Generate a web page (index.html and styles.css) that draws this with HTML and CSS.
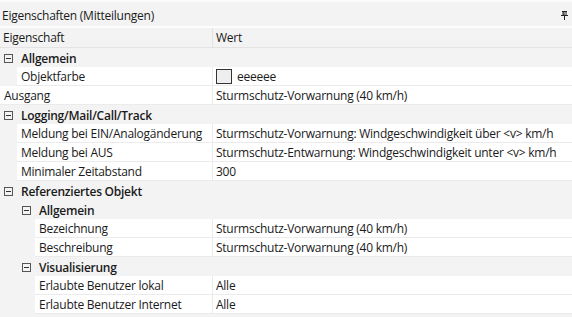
FILE: index.html
```html
<!DOCTYPE html>
<html lang="de">
<head>
    <meta charset="UTF-8">
    <title>Eigenschaften (Mitteilungen)</title>
    <link rel="stylesheet" href="styles.css">
</head>
<body>
    <div class="panel">
        <div class="titlebar">
            <span>Eigenschaften (Mitteilungen)</span>
            <svg class="pin" width="7" height="9" viewBox="0 0 7 9">
                <path d="M1 0.5h5M2 0.5v4M5 0.5v4M0 4.5h7M3.5 5v4" stroke="#222" stroke-width="1" fill="none"/>
                <path d="M2.5 1h1v3.5h-1z" fill="#222"/>
            </svg>
        </div>

        <div class="header">
            <div class="col-name">Eigenschaft</div>
            <div class="col-value">Wert</div>
        </div>

        <div class="grid">
            <div class="cat">
                <span class="toggle"></span>Allgemein
            </div>
            <div class="row lvl1">
                <div class="name">Objektfarbe</div>
                <div class="value"><span class="swatch"></span>eeeeee</div>
            </div>
            <div class="row">
                <div class="name">Ausgang</div>
                <div class="value">Sturmschutz-Vorwarnung (40 km/h)</div>
            </div>

            <div class="cat">
                <span class="toggle"></span>Logging/Mail/Call/Track
            </div>
            <div class="row lvl1">
                <div class="name">Meldung bei EIN/Analogänderung</div>
                <div class="value">Sturmschutz-Vorwarnung: Windgeschwindigkeit über &lt;v&gt; km/h</div>
            </div>
            <div class="row lvl1">
                <div class="name">Meldung bei AUS</div>
                <div class="value">Sturmschutz-Entwarnung: Windgeschwindigkeit unter &lt;v&gt; km/h</div>
            </div>
            <div class="row lvl1">
                <div class="name">Minimaler Zeitabstand</div>
                <div class="value">300</div>
            </div>

            <div class="cat">
                <span class="toggle"></span>Referenziertes Objekt
            </div>
            <div class="cat sub">
                <span class="toggle"></span>Allgemein
            </div>
            <div class="row lvl2">
                <div class="name">Bezeichnung</div>
                <div class="value">Sturmschutz-Vorwarnung (40 km/h)</div>
            </div>
            <div class="row lvl2">
                <div class="name">Beschreibung</div>
                <div class="value">Sturmschutz-Vorwarnung (40 km/h)</div>
            </div>
            <div class="cat sub">
                <span class="toggle"></span>Visualisierung
            </div>
            <div class="row lvl2">
                <div class="name">Erlaubte Benutzer lokal</div>
                <div class="value">Alle</div>
            </div>
            <div class="row lvl2">
                <div class="name">Erlaubte Benutzer Internet</div>
                <div class="value">Alle</div>
            </div>
        </div>
    </div>
</body>
</html>
```

FILE: styles.css
```css
* {
    margin: 0;
    padding: 0;
    box-sizing: border-box;
}

body {
    font-family: 'Open Sans', 'Noto Sans', sans-serif;
    font-size: 12px;
    letter-spacing: -0.25px;
    color: #1a1a1a;
    background: #f3f3f3;
    width: 572px;
    height: 317px;
    overflow: hidden;
}

.panel {
    border-top: 2px solid #fbfbfb;
}

.titlebar {
    height: 26px;
    display: flex;
    align-items: center;
    justify-content: space-between;
    padding: 2px 4px 0 2px;
    background: #f3f3f3;
    border-bottom: 2px solid #fdfdfd;
}

.header {
    height: 20px;
    display: flex;
    align-items: center;
    background: #f3f3f3;
    border-bottom: 1px solid #e3e3e3;
}

.header .col-name {
    width: 213px;
    padding-left: 3px;
    height: 100%;
    display: flex;
    align-items: center;
    border-right: 1px solid #e3e3e3;
}

.header .col-value {
    padding-left: 3px;
}

.cat {
    height: 19px;
    display: flex;
    align-items: center;
    font-weight: 600;
    background: #f3f3f3;
    padding: 1px 0 0 4px;
}

.cat.sub {
    padding-left: 22px;
}

.toggle {
    width: 9px;
    height: 9px;
    border: 1px solid #555;
    margin-right: 8px;
    position: relative;
}

.toggle::after {
    content: '';
    position: absolute;
    left: 1px;
    right: 1px;
    top: 3px;
    height: 1px;
    background: #333;
}

.row {
    height: 19px;
    display: flex;
    background: #f3f3f3;
}

.row .name {
    width: 213px;
    padding: 1px 0 0 4px;
    background: #fff;
    border-right: 1px solid #ebebeb;
    border-bottom: 1px solid #ebebeb;
    display: flex;
    align-items: center;
    white-space: nowrap;
}

.row.lvl1 .name {
    margin-left: 17px;
    width: 196px;
}

.row.lvl2 .name {
    margin-left: 35px;
    width: 178px;
}

.row .value {
    flex: 1;
    padding: 1px 0 0 3px;
    background: #fff;
    border-bottom: 1px solid #ebebeb;
    display: flex;
    align-items: center;
    white-space: nowrap;
}

.swatch {
    width: 16px;
    height: 15px;
    border: 1px solid #333;
    background: #eee;
    margin: -1px 5px 0 0;
}
```
